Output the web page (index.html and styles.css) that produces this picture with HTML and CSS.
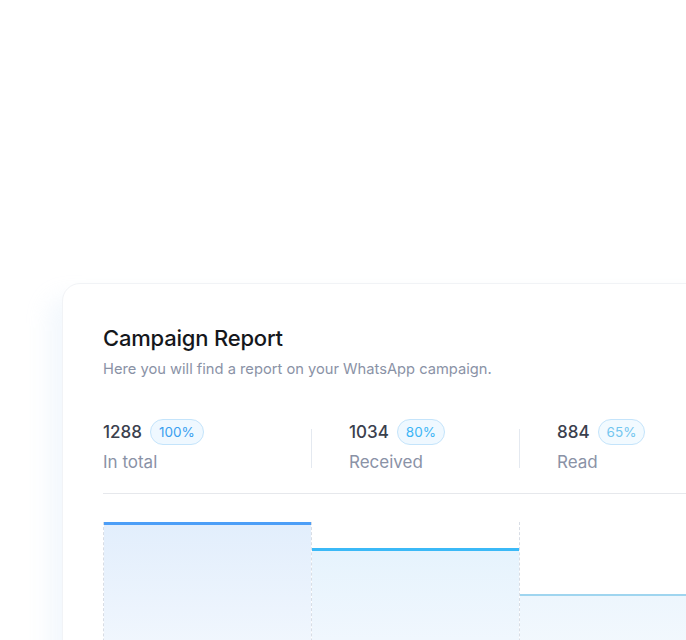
FILE: index.html
```html
<!DOCTYPE html>
<html lang="en">
<head>
    <meta charset="UTF-8">
    <meta name="viewport" content="width=device-width, initial-scale=1.0">
    <title>Campaign Report</title>
    <link rel="stylesheet" href="styles.css">
</head>
<body>
    <div class="page">
        <div class="report-card">
            <h1>Campaign Report</h1>
            <p class="subtitle">Here you will find a report on your WhatsApp campaign.</p>

            <div class="stats">
                <div class="stat">
                    <div class="stat-top">
                        <span class="stat-num">1288</span>
                        <span class="badge">100%</span>
                    </div>
                    <div class="stat-label">In total</div>
                </div>
                <div class="divider"></div>
                <div class="stat">
                    <div class="stat-top">
                        <span class="stat-num">1034</span>
                        <span class="badge badge-mid">80%</span>
                    </div>
                    <div class="stat-label">Received</div>
                </div>
                <div class="divider"></div>
                <div class="stat">
                    <div class="stat-top">
                        <span class="stat-num">884</span>
                        <span class="badge badge-light">65%</span>
                    </div>
                    <div class="stat-label">Read</div>
                </div>
            </div>

            <div class="chart">
                <div class="col"><div class="bar bar-total"></div></div>
                <div class="col"><div class="bar bar-received"></div></div>
                <div class="col"><div class="bar bar-read"></div></div>
            </div>
        </div>
    </div>
</body>
</html>
```

FILE: styles.css
```css
body {
    margin: 0;
    background: #fff;
    font-family: 'Inter', 'Noto Sans', sans-serif;
    overflow: hidden;
    height: 640px;
}

.page {
    padding: 283px 0 0 62px;
}

.report-card {
    width: 700px;
    background: #fff;
    border: 1px solid #f1f3f6;
    border-radius: 18px;
    padding: 40px 0 0 40px;
    box-shadow: -14px 14px 22px rgba(200, 222, 248, 0.22);
}

h1 {
    margin: 0;
    font-size: 22px;
    line-height: 28px;
    font-weight: 500;
    color: #15171c;
    letter-spacing: -0.2px;
}

.subtitle {
    margin: 6px 0 0;
    font-size: 14.7px;
    line-height: 22px;
    color: #8a92a6;
}

.stats {
    display: flex;
    align-items: center;
    margin-top: 39px;
    width: 660px;
    padding-bottom: 19px;
    border-bottom: 1px solid #e6e8ec;
}

.stat {
    flex: none;
    width: 208px;
}

.stat + .divider + .stat {
    padding-left: 37px;
    width: 170px;
}

.divider {
    flex: none;
    width: 1px;
    height: 39px;
    background: #e4e9f0;
    margin-top: 4px;
}

.stat-top {
    display: flex;
    align-items: center;
    gap: 8px;
    height: 26px;
}

.stat-num {
    font-size: 17px;
    font-weight: 500;
    color: #3a404d;
}

.badge {
    height: 24px;
    line-height: 24px;
    padding: 0 8px;
    border: 1px solid #c4e4fb;
    background: #eff8ff;
    border-radius: 13px;
    font-size: 13.5px;
    color: #3a9ff0;
}

.badge-mid {
    color: #3db5f5;
}

.badge-light {
    color: #72c6ef;
    background: #f2faff;
}

.stat-label {
    margin-top: 5px;
    font-size: 17px;
    line-height: 24px;
    color: #8a92a6;
}

.chart {
    display: flex;
    align-items: flex-end;
    height: 160px;
    margin-top: 28px;
}

.col {
    flex: none;
    box-sizing: border-box;
    width: 208px;
    height: 100%;
    border-left: 1px dashed #d8dde5;
    display: flex;
    align-items: flex-end;
}

.bar {
    width: 100%;
    background: linear-gradient(180deg, #e2eefc, #f5f9fe);
}

.bar-total {
    height: 157px;
    border-top: 3px solid #4c9ef7;
}

.bar-received {
    height: 131px;
    border-top: 3px solid #3bb9f7;
    background: linear-gradient(180deg, #e6f3fd, #f5f9fe);
}

.bar-read {
    height: 86px;
    border-top: 2px solid #9fd5ef;
    background: linear-gradient(180deg, #edf6fd, #f6fafe);
}
```
